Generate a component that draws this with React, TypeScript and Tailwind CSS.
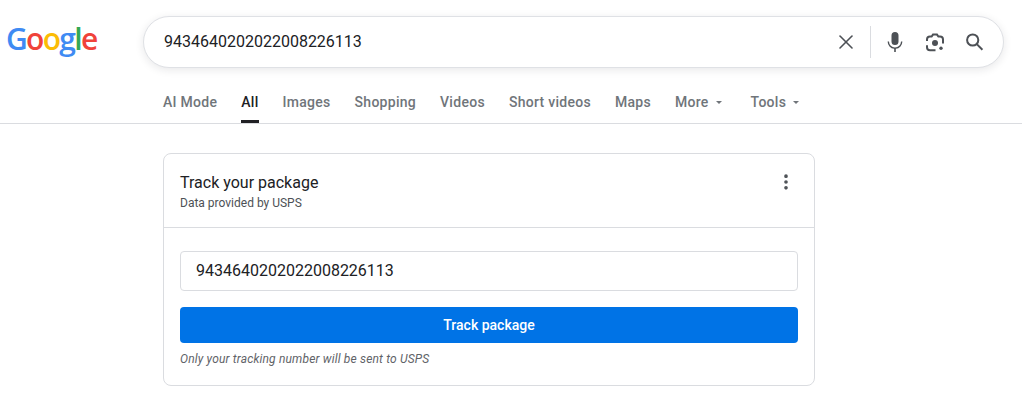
import { X, MoreVertical } from "lucide-react"

const tabs = ["AI Mode", "All", "Images", "Shopping", "Videos", "Short videos", "Maps"]
const trackingNumber = "9434640202022008226113"

const Logo = () => (
  <div className="w-[143px] pl-[6px] pt-[3px] shrink-0 font-['Open_Sans',sans-serif] text-[30px] leading-[40px] tracking-[-1.7px] font-semibold">
    <span className="text-[#3f8bf3]">G</span>
    <span className="text-[#f0433a]">o</span>
    <span className="text-[#fbbc05]">o</span>
    <span className="text-[#3f8bf3]">g</span>
    <span className="text-[#34a853]">l</span>
    <span className="text-[#f0433a]">e</span>
  </div>
)

const Mic = () => (
  <svg width="24" height="24" viewBox="0 0 24 24" fill="#4d5156">
    <path d="M12 15a3.5 3.5 0 0 0 3.5-3.5v-6a3.5 3.5 0 0 0-7 0v6A3.5 3.5 0 0 0 12 15z" />
    <path d="M18 11.5a6 6 0 0 1-12 0H4.6a7.4 7.4 0 0 0 6.6 7.3V22h1.6v-3.2a7.4 7.4 0 0 0 6.6-7.3z" />
  </svg>
)

const Lens = () => (
  <svg width="24" height="24" viewBox="0 0 24 24" fill="none">
    <circle cx="12" cy="13" r="3" fill="#4d5156" />
    <circle cx="18" cy="18.2" r="1.7" fill="#4d5156" />
    <path
      d="M12.5 20.2H7a3 3 0 0 1-3-3v-2M4 11V9.5a3 3 0 0 1 3-3h1.6L10 4.6h4l1.4 1.9H17a3 3 0 0 1 3 3v4"
      stroke="#4d5156"
      strokeWidth="2"
    />
  </svg>
)

const Search = () => (
  <svg width="24" height="24" viewBox="0 0 24 24" fill="none" stroke="#4d5156" strokeWidth="2">
    <circle cx="9.7" cy="10" r="5.6" />
    <path d="M13.8 14.1l5.6 5.6" />
  </svg>
)

const Caret = () => <span className="ml-[7px] mt-[1px] border-x-[3.5px] border-t-[3.5px] border-x-transparent border-t-[#70757a]" />

export default function App() {
  return (
    <div className="w-[1022px] h-[410px] overflow-hidden bg-white font-['Roboto',sans-serif]">
      <header className="flex pt-[16px] h-[68px]">
        <Logo />
        <div className="w-[861px] h-[52px] flex items-center rounded-full border border-[#dfe1e5] bg-white shadow-[0_2px_8px_rgba(32,33,36,0.1)] pl-[20px] pr-[16px]">
          <span className="flex-1 text-[16px] text-[#202124]">{trackingNumber}</span>
          <X size={24} strokeWidth={1.6} className="text-[#4d5156]" />
          <div className="h-[32px] w-px bg-[#dadce0] mx-[12px]" />
          <div className="flex items-center gap-[16px]">
            <Mic />
            <Lens />
            <Search />
          </div>
        </div>
      </header>

      <nav className="flex h-[56px] pl-[163px] pt-[24px] border-b border-[#dadce0] text-[14px] tracking-[0.28px] font-medium text-[#70757a]">
        <div className="flex gap-[24px]">
          {tabs.map((t) => (
            <div
              key={t}
              className={t === "All" ? "h-[31px] leading-[20px] text-[#202124] border-b-[3px] border-[#202124]" : "h-[31px] leading-[20px]"}
            >
              {t}
            </div>
          ))}
          <div className="flex items-center h-[20px]">
            More
            <Caret />
          </div>
        </div>
        <div className="flex items-center h-[20px] ml-[29px]">
          Tools
          <Caret />
        </div>
      </nav>

      <main className="pt-[29px] pl-[163px]">
        <section className="w-[652px] h-[233px] rounded-[8px] border border-[#dadce0]">
          <div className="h-[74px] border-b border-[#dadce0] flex justify-between px-[16px] pt-[19px]">
            <div>
              <div className="text-[16px] leading-[20px] text-[#202124]">Track your package</div>
              <div className="text-[12px] leading-[20px] text-[#4d5156]">Data provided by USPS</div>
            </div>
            <MoreVertical size={20} strokeWidth={2.4} className="text-[#4d5156] mt-[-1px] mr-[2px]" />
          </div>
          <div className="px-[16px] pt-[23px]">
            <div className="h-[40px] rounded-[4px] border border-[#dadce0] flex items-center pl-[15px] text-[16px] text-[#202124]">
              {trackingNumber}
            </div>
            <button className="mt-[16px] w-full h-[36px] rounded-[4px] bg-[#0073e6] text-white text-[14px] font-medium">
              Track package
            </button>
            <p className="mt-[8px] text-[12px] leading-[16px] italic tracking-[0.17px] text-[#5f6368]">
              Only your tracking number will be sent to USPS
            </p>
          </div>
        </section>
      </main>
    </div>
  )
}
